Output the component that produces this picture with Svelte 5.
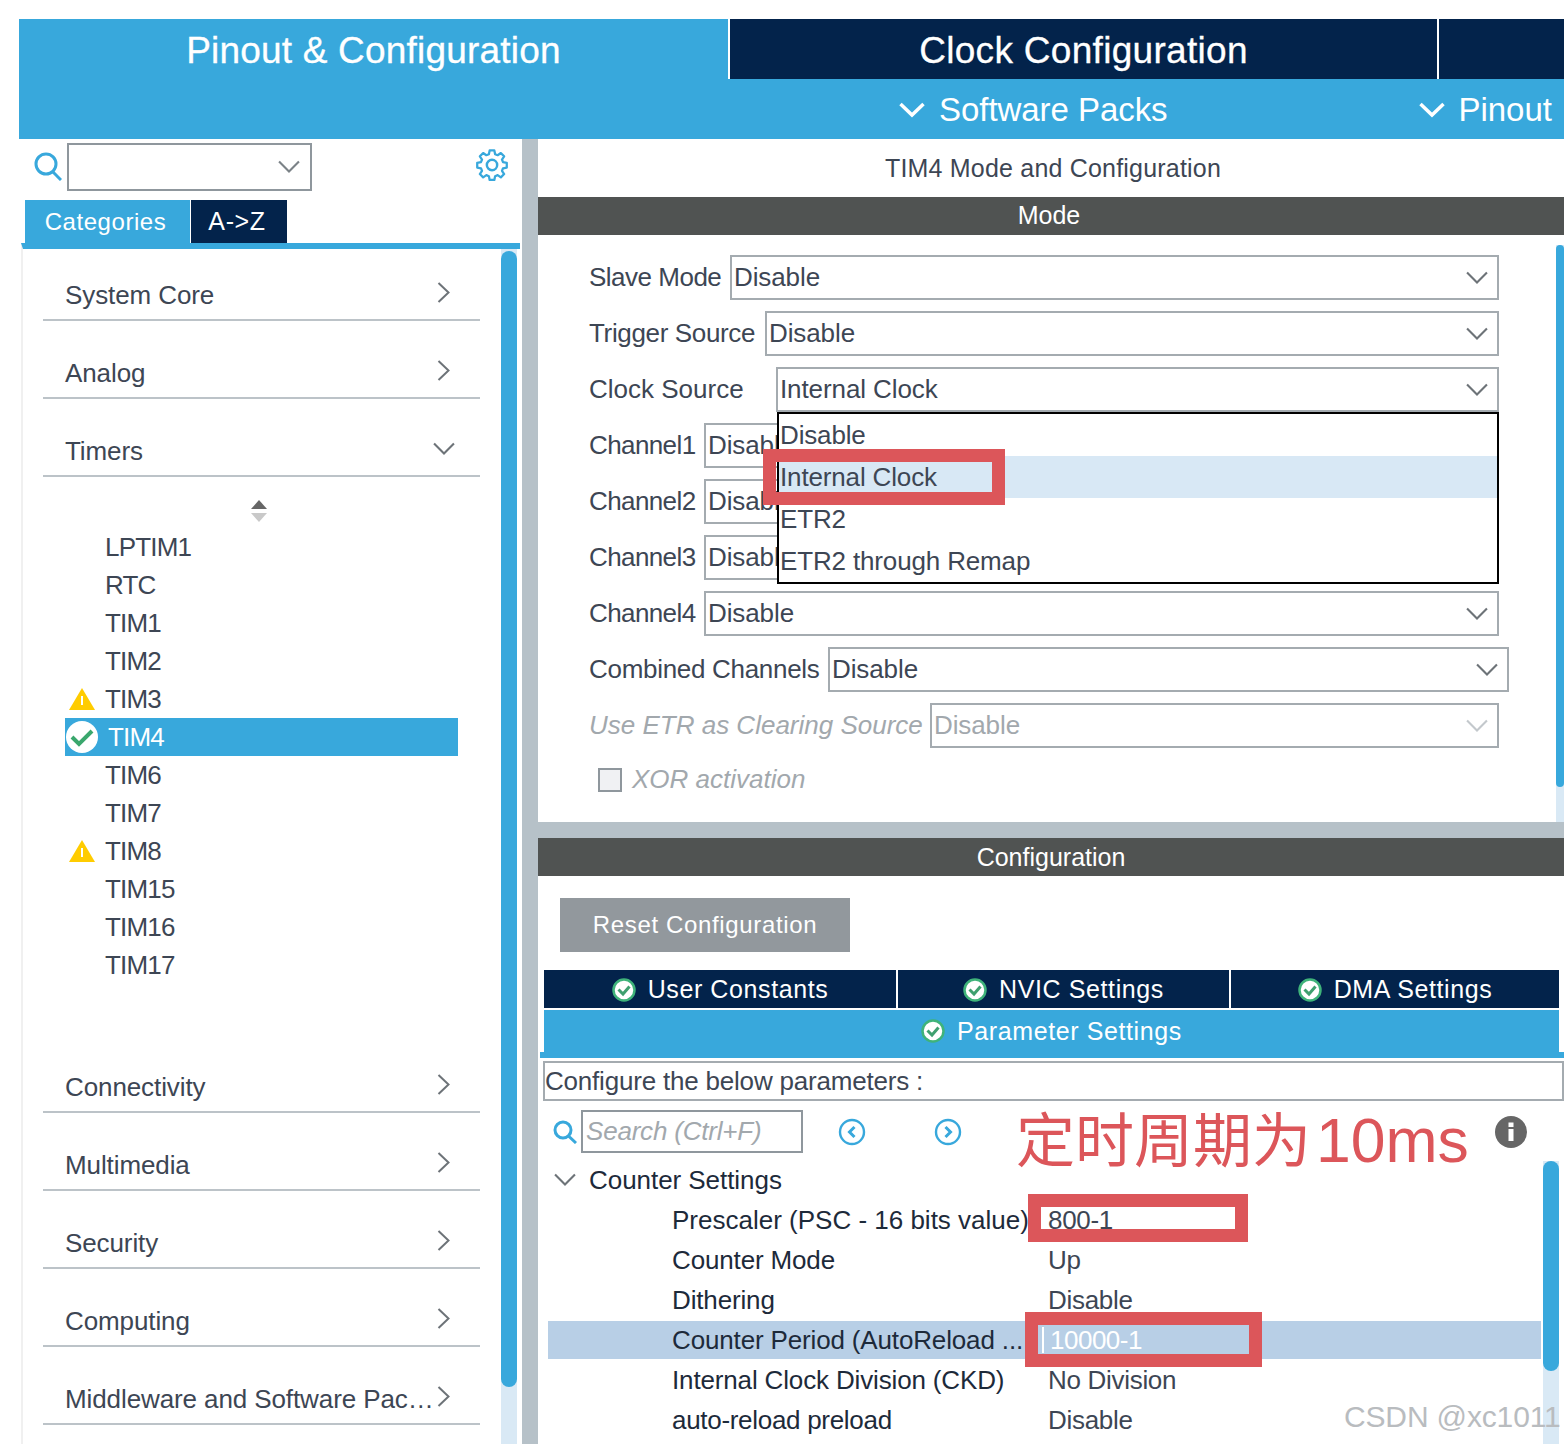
<script>
	const sections = ['System Core', 'Analog', 'Timers'];
	const sectionsBelow = ['Connectivity', 'Multimedia', 'Security', 'Computing', 'Middleware and Software Pac…'];
	const timers = [
		{ name: 'LPTIM1' },
		{ name: 'RTC' },
		{ name: 'TIM1' },
		{ name: 'TIM2' },
		{ name: 'TIM3', state: 'warn' },
		{ name: 'TIM4', state: 'ok' },
		{ name: 'TIM6' },
		{ name: 'TIM7' },
		{ name: 'TIM8', state: 'warn' },
		{ name: 'TIM15' },
		{ name: 'TIM16' },
		{ name: 'TIM17' }
	];
	// left = select's offset from the panel edge, right = gap to the panel edge
	const modes = [
		{ label: 'Slave Mode', value: 'Disable', left: 192, right: 66, squeeze: -0.5 },
		{ label: 'Trigger Source', value: 'Disable', left: 227, right: 66, squeeze: -0.35 },
		{ label: 'Clock Source', value: 'Internal Clock', left: 238, right: 66, squeeze: 0 },
		{ label: 'Channel1', value: 'Disable', left: 166, right: 66, squeeze: -0.6 },
		{ label: 'Channel2', value: 'Disable', left: 166, right: 66, squeeze: -0.6 },
		{ label: 'Channel3', value: 'Disable', left: 166, right: 66, squeeze: -0.6 },
		{ label: 'Channel4', value: 'Disable', left: 166, right: 66, squeeze: -0.6 },
		{ label: 'Combined Channels', value: 'Disable', left: 290, right: 56, squeeze: -0.3 },
		{ label: 'Use ETR as Clearing Source', value: 'Disable', left: 392, right: 66, off: true, squeeze: 0 }
	];
	const options = ['Disable', 'Internal Clock', 'ETR2', 'ETR2 through Remap'];
	const configTabs = [
		{ label: 'User Constants', width: 352 },
		{ label: 'NVIC Settings', width: 331 },
		{ label: 'DMA Settings', width: 328 }
	];
	const params = [
		{ label: 'Prescaler (PSC - 16 bits value)', value: '800-1', squeeze: 0 },
		{ label: 'Counter Mode', value: 'Up', squeeze: -0.15 },
		{ label: 'Dithering', value: 'Disable', squeeze: -0.15 },
		{ label: 'Counter Period (AutoReload ...', value: '10000-1', active: true, squeeze: -0.15 },
		{ label: 'Internal Clock Division (CKD)', value: 'No Division', squeeze: -0.15 },
		{ label: 'auto-reload preload', value: 'Disable', squeeze: -0.3 }
	];
</script>

{#snippet chevronDown(size, color)}
	<svg class="chev" width={size} height={size * 0.62} viewBox="0 0 21 13" fill="none" stroke={color} stroke-width="2"><path d="M1 1.5 10.5 11 20 1.5" /></svg>
{/snippet}

{#snippet chevronRight()}
	<svg class="chev-right" width="13" height="21" viewBox="0 0 13 21" fill="none" stroke="#6d7378" stroke-width="2"><path d="M1.5 1 11.5 10.5 1.5 20" /></svg>
{/snippet}

{#snippet tick()}
	<svg class="tick" width="24" height="24" viewBox="0 0 24 24"><circle cx="12" cy="12" r="10.5" fill="#fff" stroke="#3fb37a" stroke-width="2.5" /><path d="M6.5 11.5 11 16 17.5 8.5" fill="none" stroke="#3fa06f" stroke-width="3" /></svg>
{/snippet}

{#snippet section(name, open)}
	<div class="section">
		<span>{name}</span>
		{#if open}
			{@render chevronDown(22, '#6d7378')}
		{:else}
			{@render chevronRight()}
		{/if}
	</div>
{/snippet}

<div class="page">
	<header class="header">
		<div class="perspectives">
			<div class="persp active">Pinout &amp; Configuration</div>
			<div class="persp clock">Clock Configuration</div>
			<div class="persp rest"></div>
		</div>
		<div class="submenu">
			<div class="menu packs">
				<svg width="26" height="16" viewBox="0 0 26 16" fill="none" stroke="#fff" stroke-width="3.5"><path d="M1.5 2 13 13 24.5 2" /></svg>
				<span>Software Packs</span>
			</div>
			<div class="menu pinout">
				<svg width="26" height="16" viewBox="0 0 26 16" fill="none" stroke="#fff" stroke-width="3.5"><path d="M1.5 2 13 13 24.5 2" /></svg>
				<span>Pinout</span>
			</div>
		</div>
	</header>

	<div class="body">
		<aside class="left">
			<div class="search-row">
				<svg class="lens" width="28" height="29" viewBox="0 0 28 29" fill="none" stroke="#38a8dc" stroke-width="3"><circle cx="12" cy="12" r="10" /><path d="M19 20 27 28" /></svg>
				<div class="combo">{@render chevronDown(22, '#7b8287')}</div>
				<svg class="gear" width="32" height="32" viewBox="0 0 34 34" fill="none" stroke="#38a8dc" stroke-linejoin="round">
					<circle cx="17" cy="17" r="5.5" stroke-width="2.6" />
					<path stroke-width="2.4" d="M14.5 1.5h5l.8 4 2.7 1.1 3.4-2.3 3.5 3.5-2.3 3.4 1.1 2.7 4 .8v5l-4 .8-1.1 2.7 2.3 3.4-3.5 3.5-3.4-2.3-2.7 1.1-.8 4h-5l-.8-4-2.7-1.1-3.4 2.3-3.5-3.5 2.3-3.4-1.1-2.7-4-.8v-5l4-.8 1.1-2.7-2.3-3.4 3.5-3.5 3.4 2.3 2.7-1.1z" />
				</svg>
			</div>
			<div class="view-tabs">
				<div class="view-tab on">Categories</div>
				<div class="view-tab">A-&gt;Z</div>
			</div>
			<div class="list">
				{#each sections as name}
					{@render section(name, name === 'Timers')}
				{/each}
				<div class="tree">
					<div class="sorter">
						<svg width="16" height="22" viewBox="0 0 16 22"><path d="M8 0 16 9H0z" fill="#666" /><path d="M8 22 0 13H16z" fill="#c9c9c9" /></svg>
					</div>
					{#each timers as t}
						<div class="tree-item" class:selected={t.state === 'ok'}>
							<div class="cell">
								{#if t.state === 'warn'}
									<svg width="26" height="22" viewBox="0 0 26 22"><path d="M13 0 26 22H0z" fill="#ffcc00" /><path d="M13 8V17" stroke="#fff" stroke-width="2" /></svg>
								{:else if t.state === 'ok'}
									<svg width="34" height="34" viewBox="0 0 34 34"><circle cx="17" cy="17" r="16" fill="#fff" /><path d="M7 17 14 24 27 11" fill="none" stroke="#3aa76d" stroke-width="4" /></svg>
								{/if}
							</div>
							<span>{t.name}</span>
						</div>
					{/each}
				</div>
				{#each sectionsBelow as name}
					{@render section(name, false)}
				{/each}
				<div class="scroll list-scroll"><div class="thumb"></div></div>
			</div>
		</aside>

		<div class="splitter"></div>

		<main class="right">
			<div class="title">TIM4 Mode and Configuration</div>
			<div class="bar mode-bar">Mode</div>
			<section class="mode">
				{#each modes as m}
					<div class="mode-row" class:off={m.off}>
						<div class="mode-label" style="width: {m.left}px; letter-spacing: {m.squeeze}px">{m.label}</div>
						<div class="select" style="margin-right: {m.right - 1}px">
							<span>{m.value}</span>
							{@render chevronDown(22, m.off ? '#c3c8cc' : '#6d7378')}
						</div>
					</div>
				{/each}
				<div class="xor"><div class="checkbox"></div><span>XOR activation</span></div>

				<div class="dropdown">
					{#each options as o}
						<div class="option" class:hover={o === 'Internal Clock'}>{o}</div>
					{/each}
				</div>
				<div class="mark mark-clock"></div>
				<div class="scroll mode-scroll"><div class="thumb"></div></div>
			</section>

			<div class="h-split"></div>
			<div class="bar">Configuration</div>

			<section class="config">
				<div class="reset">Reset Configuration</div>
				<div class="config-tabs">
					{#each configTabs as tab}
						<div class="config-tab" style="width: {tab.width}px">
							{@render tick()}
							<span>{tab.label}</span>
						</div>
					{/each}
				</div>
				<div class="config-tab param-tab">
					{@render tick()}
					<span>Parameter Settings</span>
				</div>
				<div class="tab-line"></div>
				<div class="hint">Configure the below parameters :</div>
				<div class="find">
					<svg width="24" height="24" viewBox="0 0 24 24" fill="none" stroke="#38a8dc" stroke-width="3"><circle cx="10" cy="10" r="8" /><path d="M15.5 16 23 23" /></svg>
					<div class="find-input">Search (Ctrl+F)</div>
					<svg class="nav prev" width="28" height="28" viewBox="0 0 28 28" fill="none" stroke="#38a8dc" stroke-width="2.4"><circle cx="14" cy="14" r="12" /><path stroke-width="3" d="M16.5 9 11.5 14 16.5 19" /></svg>
					<svg class="nav next" width="28" height="28" viewBox="0 0 28 28" fill="none" stroke="#38a8dc" stroke-width="2.4"><circle cx="14" cy="14" r="12" /><path stroke-width="3" d="M11.5 9 16.5 14 11.5 19" /></svg>
				</div>
				<div class="group">
					{@render chevronDown(22, '#6d7378')}
					<span>Counter Settings</span>
				</div>
				{#each params as p}
					<div class="param" class:active={p.active}>
						<div class="param-label" style="letter-spacing: {p.squeeze}px">{p.label}</div>
						<div class="param-value">
							{#if p.active}<i class="caret"></i>{/if}{p.value}
						</div>
					</div>
				{/each}

				<div class="note">定时周期为<span class="note-num">10ms</span></div>
				<svg class="info" width="32" height="32" viewBox="0 0 32 32"><circle cx="16" cy="16" r="16" fill="#666" /><rect x="13.5" y="13" width="5" height="12" fill="#fff" /><rect x="13.5" y="6.5" width="5" height="4.5" fill="#fff" /></svg>
				<div class="mark mark-psc"></div>
				<div class="mark mark-arr"></div>
				<div class="scroll config-scroll"><div class="thumb"></div></div>
				<div class="watermark">CSDN @xc1011</div>
			</section>
		</main>
	</div>
</div>

<style>
	:global(body) {
		margin: 0;
		background: #fff;
	}

	.page {
		width: 1545px;
		height: 1425px;
		padding: 19px 0 0 19px;
		overflow: hidden;
		font-family: 'Liberation Sans', Arial, sans-serif;
		font-size: 26px;
		color: #3d4654;
	}

	/* Top header */
	.header {
		height: 120px;
		background: #38a8dc;
		color: #fff;
	}

	.perspectives {
		display: flex;
		height: 60px;
		background: #fff;
	}

	.persp {
		display: flex;
		align-items: center;
		justify-content: center;
		box-sizing: border-box;
		padding-top: 3px;
		font-size: 37px;
		-webkit-text-stroke: 0.3px #fff;
	}

	.persp.active {
		width: 709px;
		background: #38a8dc;
		letter-spacing: 0.2px;
	}

	.persp.clock {
		width: 707px;
		margin-left: 2px;
		background: #03234b;
		letter-spacing: 0.3px;
	}

	.persp.rest {
		flex: 1;
		margin-left: 2px;
		background: #03234b;
	}

	.submenu {
		display: flex;
		height: 60px;
		box-sizing: border-box;
		padding-top: 1px;
		font-size: 33px;
	}

	.menu {
		display: flex;
		align-items: center;
		gap: 14px;
	}

	.menu span {
		letter-spacing: -0.05px;
	}

	.packs {
		margin-left: 880px;
	}

	.pinout {
		margin-left: 251px;
	}

	.body {
		display: flex;
		height: 1305px;
	}

	/* Left panel */
	.left {
		width: 503px;
		flex: none;
		display: flex;
		flex-direction: column;
	}

	.search-row {
		height: 61px;
		display: flex;
		align-items: flex-start;
		box-sizing: border-box;
		padding: 4px 0 0 15px;
	}

	.lens {
		margin-top: 9px;
	}

	.combo {
		width: 245px;
		height: 48px;
		margin-left: 5px;
		box-sizing: border-box;
		border: 2px solid #8f979d;
		display: flex;
		align-items: center;
		justify-content: flex-end;
		padding-right: 10px;
	}

	.gear {
		margin: 6px 0 0 164px;
	}

	.view-tabs {
		display: flex;
		gap: 1px;
		height: 43px;
		margin-left: 6px;
	}

	.view-tab {
		width: 96px;
		background: #03234b;
		color: #fff;
		display: flex;
		align-items: center;
		justify-content: center;
		padding-right: 4px;
		box-sizing: border-box;
		font-size: 25px;
		letter-spacing: 0.6px;
	}

	.view-tab.on {
		width: 165px;
		padding-right: 4px;
		background: #38a8dc;
		font-size: 24px;
		letter-spacing: 0.55px;
	}

	.list {
		position: relative;
		flex: 1;
		margin-left: 2px;
		width: 499px;
		border-top: 6px solid #38a8dc;
		border-left: 2px solid #f0f0f0;
		box-sizing: border-box;
		padding-top: 22px;
	}

	.section {
		display: flex;
		align-items: center;
		justify-content: space-between;
		box-sizing: border-box;
		width: 437px;
		height: 50px;
		margin: 28px 0 0 20px;
		padding: 0 30px 0 22px;
		border-bottom: 2px solid #bcc3c8;
		white-space: nowrap;
	}

	.section span {
		letter-spacing: -0.1px;
		margin-top: 1px;
	}

	.section :global(svg) {
		margin-top: -6px;
	}

	.section :global(.chev) {
		margin-right: -5px;
		margin-top: -4px;
	}

	.list > .section:first-child {
		margin-top: 0;
	}

	.tree {
		padding-bottom: 51px;
	}

	.sorter {
		height: 51px;
		box-sizing: border-box;
		padding: 21px 0 0 228px;
	}

	.tree-item {
		display: flex;
		align-items: center;
		width: 393px;
		height: 38px;
		margin-left: 42px;
		letter-spacing: -0.8px;
	}

	.cell {
		width: 34px;
		display: flex;
		justify-content: center;
		margin-right: 6px;
	}

	.tree-item.selected {
		background: #38a8dc;
		color: #fff;
	}

	.tree-item.selected .cell {
		margin-right: 9px;
	}

	/* Scrollbars */
	.scroll {
		position: absolute;
		background: #d9e9f5;
	}

	.thumb {
		background: #38a8dc;
		border-radius: 8px;
	}

	.list-scroll {
		left: 478px;
		top: 0;
		bottom: 0;
		width: 16px;
	}

	.list-scroll .thumb {
		margin-top: 2px;
		height: 1136px;
	}

	.splitter {
		width: 16px;
		flex: none;
		background: #b6c1c8;
	}

	/* Right panel */
	.right {
		flex: 1;
		min-width: 0;
		display: flex;
		flex-direction: column;
	}

	.title {
		height: 58px;
		display: flex;
		align-items: center;
		justify-content: center;
		padding-left: 4px;
		font-size: 25px;
		letter-spacing: 0.2px;
	}

	.bar {
		height: 38px;
		flex: none;
		box-sizing: border-box;
		background: #505352;
		color: #fff;
		display: flex;
		align-items: center;
		justify-content: center;
		font-size: 25px;
	}

	.mode-bar {
		padding: 0 4px 2px 0;
	}

	.mode {
		position: relative;
		height: 587px;
		box-sizing: border-box;
		padding-top: 20px;
	}

	.mode-row {
		display: flex;
		height: 45px;
		margin-bottom: 11px;
		padding-left: 51px;
		align-items: stretch;
	}

	.mode-label {
		display: flex;
		align-items: center;
		margin-left: -51px;
		padding-left: 51px;
		box-sizing: border-box;
		flex: none;
		white-space: nowrap;
	}

	.select {
		flex: 1;
		display: flex;
		align-items: center;
		justify-content: space-between;
		box-sizing: border-box;
		border: 2px solid #a4abb0;
		padding: 0 9px 0 2px;
		white-space: nowrap;
		letter-spacing: -0.1px;
	}

	.mode-row.off {
		color: #a2a8ad;
	}

	.mode-row.off .mode-label {
		font-style: italic;
	}

	.xor {
		display: flex;
		align-items: center;
		gap: 10px;
		margin: 16px 0 0 60px;
		color: #a2a8ad;
		font-style: italic;
	}

	.checkbox {
		width: 24px;
		height: 24px;
		box-sizing: border-box;
		background: #f0f1f3;
		border: 2px solid #8f979d;
	}

	.dropdown {
		position: absolute;
		left: 239px;
		top: 177px;
		width: 722px;
		height: 172px;
		box-sizing: border-box;
		border: 2px solid #000;
		background: #fff;
		letter-spacing: -0.15px;
	}

	.option {
		height: 42px;
		line-height: 42px;
		padding-left: 1px;
	}

	.option.hover {
		background: #d8e8f5;
	}

	.mark {
		position: absolute;
		box-sizing: border-box;
		border: 13px solid #dc565a;
	}

	.mark-clock {
		left: 225px;
		top: 214px;
		width: 242px;
		height: 56px;
	}

	.mode-scroll {
		left: 1018px;
		top: 10px;
		bottom: 0;
		width: 8px;
	}

	.mode-scroll .thumb {
		height: 542px;
	}

	.h-split {
		height: 16px;
		flex: none;
		background: #b6c1c8;
	}

	/* Configuration */
	.config {
		position: relative;
		flex: 1;
		overflow: hidden;
		padding-top: 22px;
	}

	.reset {
		width: 290px;
		height: 54px;
		margin-left: 22px;
		background: #92989d;
		color: #fff;
		display: flex;
		align-items: center;
		justify-content: center;
		font-size: 24px;
		letter-spacing: 0.65px;
	}

	.config-tabs {
		display: flex;
		gap: 2px;
		margin: 18px 0 2px 6px;
	}

	.config-tab {
		height: 38px;
		box-sizing: border-box;
		padding-top: 1px;
		background: #03234b;
		color: #fff;
		display: flex;
		align-items: center;
		justify-content: center;
		gap: 12px;
		font-size: 25px;
		letter-spacing: 0.6px;
	}

	.param-tab {
		height: 42px;
		width: 1015px;
		margin-left: 6px;
		padding-top: 0;
		background: #38a8dc;
	}

	.tab-line {
		height: 6px;
		margin-left: 2px;
		background: #38a8dc;
	}

	.hint {
		height: 40px;
		margin: 3px 0 0 5px;
		box-sizing: border-box;
		border: 2px solid #a4abb0;
		display: flex;
		align-items: center;
		white-space: nowrap;
		letter-spacing: -0.2px;
	}

	.find {
		display: flex;
		align-items: center;
		height: 43px;
		margin-top: 9px;
		padding-left: 15px;
	}

	.find-input {
		width: 222px;
		height: 43px;
		margin-left: 4px;
		box-sizing: border-box;
		border: 2px solid #8f979d;
		display: flex;
		align-items: center;
		padding-left: 3px;
		color: #a2a8ad;
		font-style: italic;
		letter-spacing: -0.2px;
	}

	.nav.prev {
		margin-left: 35px;
	}

	.nav.next {
		margin-left: 68px;
	}

	.group {
		display: flex;
		align-items: center;
		height: 40px;
		margin-top: 7px;
		padding-left: 16px;
		gap: 13px;
		color: #1d2a3a;
		letter-spacing: -0.05px;
	}

	.param {
		display: flex;
		align-items: center;
		height: 40px;
		margin-right: 23px;
		margin-left: 10px;
		color: #1d2a3a;
		white-space: nowrap;
	}

	.param-label {
		width: 376px;
		padding-left: 124px;
		flex: none;
		box-sizing: content-box;
	}

	.param-value {
		color: #3d4654;
		display: flex;
		align-items: center;
		letter-spacing: -0.3px;
	}

	.param.active {
		height: 38px;
		margin-top: 1px;
		margin-bottom: 1px;
		background: #b8cfe6;
	}

	.param.active .param-value {
		color: #fff;
		margin-left: -6px;
		letter-spacing: -0.5px;
	}

	.caret {
		width: 2px;
		height: 26px;
		margin-right: 6px;
		background: #fff;
	}

	.note {
		position: absolute;
		left: 478px;
		top: 226px;
		display: flex;
		align-items: baseline;
		font-family: 'Liberation Sans', 'Noto Sans CJK SC', sans-serif;
		font-size: 59px;
		line-height: 76px;
		color: #dc565a;
		white-space: nowrap;
	}

	.note-num {
		margin-left: 5px;
		font-size: 62.5px;
	}

	.info {
		position: absolute;
		left: 957px;
		top: 240px;
	}

	.mark-psc {
		left: 490px;
		top: 318px;
		width: 220px;
		height: 48px;
	}

	.mark-arr {
		left: 487px;
		top: 436px;
		width: 237px;
		height: 55px;
	}

	.config-scroll {
		left: 1005px;
		top: 285px;
		bottom: 0;
		width: 16px;
	}

	.config-scroll .thumb {
		height: 210px;
	}

	.watermark {
		position: absolute;
		left: 806px;
		top: 526px;
		color: #b9bcbf;
		font-size: 30px;
		line-height: 30px;
		letter-spacing: -0.15px;
		white-space: nowrap;
	}
</style>
